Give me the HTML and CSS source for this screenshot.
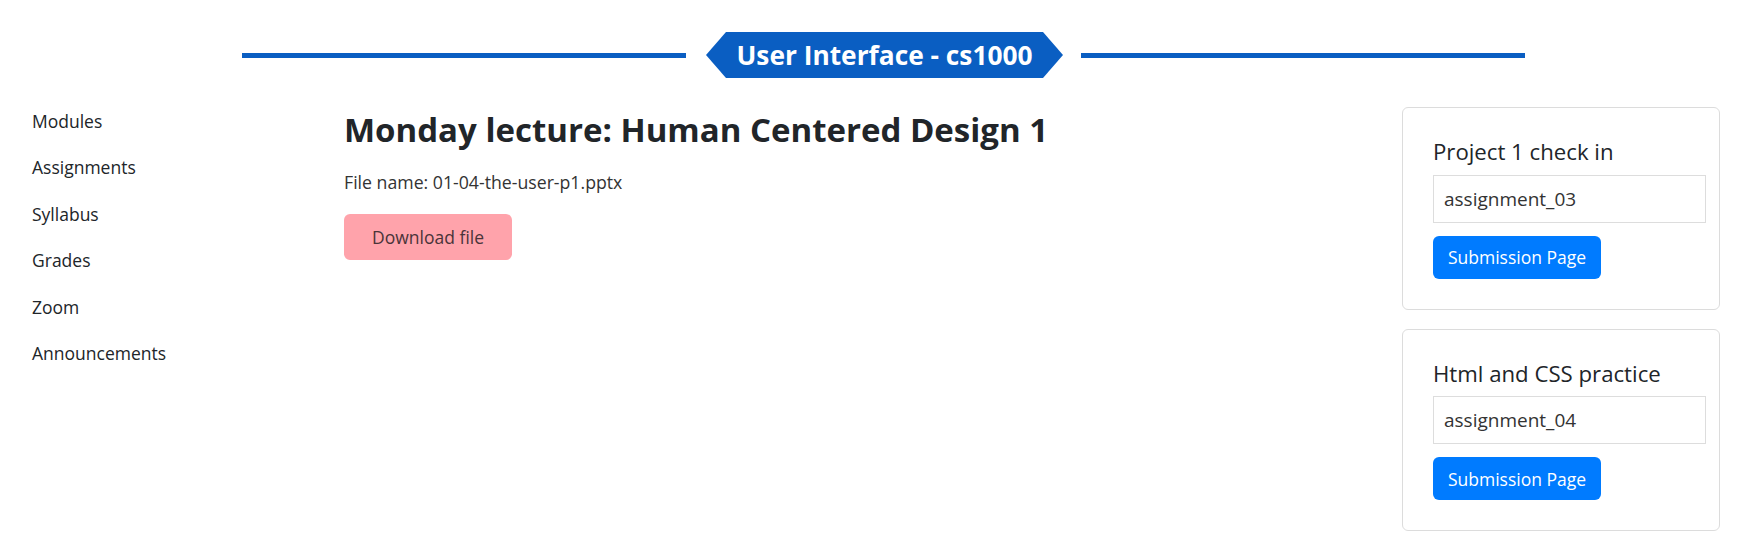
FILE: index.html
```html
<!DOCTYPE html>
<html lang="en">
<head>
<meta charset="utf-8">
<title>User Interface - cs1000</title>
<link rel="stylesheet" href="styles.css">
</head>
<body>
<header class="banner">
  <span class="rule"></span>
  <h1 class="course-title">User Interface - cs1000</h1>
  <span class="rule"></span>
</header>
<div class="layout">
  <nav class="side-nav">
    <a class="nav-link" href="#">Modules</a>
    <a class="nav-link" href="#">Assignments</a>
    <a class="nav-link" href="#">Syllabus</a>
    <a class="nav-link" href="#">Grades</a>
    <a class="nav-link" href="#">Zoom</a>
    <a class="nav-link" href="#">Announcements</a>
  </nav>
  <main class="lecture">
    <h2 class="lecture-title">Monday lecture: Human Centered Design 1</h2>
    <p class="file-name">File name: 01-04-the-user-p1.pptx</p>
    <button class="btn-download" type="button">Download file</button>
  </main>
  <aside class="assignments">
    <section class="card">
      <h5 class="card-title">Project 1 check in</h5>
      <input class="card-input" type="text" value="assignment_03">
      <button class="btn-submit" type="button">Submission Page</button>
    </section>
    <section class="card">
      <h5 class="card-title">Html and CSS practice</h5>
      <input class="card-input" type="text" value="assignment_04">
      <button class="btn-submit" type="button">Submission Page</button>
    </section>
  </aside>
</div>
</body>
</html>
```
FILE: styles.css
```css
* { box-sizing: border-box; }
body {
  margin: 0;
  font-family: "Open Sans", "Noto Sans", sans-serif;
  color: #212529;
  background: #fff;
}
.banner {
  display: flex;
  align-items: center;
  justify-content: center;
  padding-left: 12px;
  margin-top: 32px;
  margin-bottom: 20px;
}
.rule {
  width: 444px;
  height: 5px;
  background: #0a5ec2;
}
.course-title {
  margin: 0 18px 0 20px;
  width: 357px;
  height: 46px;
  background: #0a5ec2;
  color: #fff;
  font-size: 26.3px;
  font-weight: 700;
  display: flex;
  align-items: center;
  justify-content: center;
  clip-path: polygon(20px 0, calc(100% - 20px) 0, 100% 50%, calc(100% - 20px) 100%, 20px 100%, 0 50%);
}
.layout {
  display: grid;
  grid-template-columns: 330px 1fr 318px;
  padding: 0 35px 0 14px;
}
.side-nav {
  display: flex;
  flex-direction: column;
  align-items: flex-start;
}
.nav-link {
  color: #212529;
  text-decoration: none;
  font-size: 17.5px;
  line-height: 27px;
  padding: 9.75px 18px;
}
.lecture {
  padding-top: 12px;
  padding-right: 30px;
}
.lecture-title {
  margin: 0 0 20px;
  font-size: 33px;
  line-height: 1.2;
  font-weight: 700;
}
.file-name {
  margin: 0 0 19px;
  font-size: 17.7px;
  line-height: 25.5px;
  color: #333;
}
.btn-download {
  font-family: inherit;
  width: 168px;
  height: 46px;
  border: 0;
  border-radius: 6px;
  background: #ffa3ab;
  color: #4a3439;
  font-size: 17.5px;
}
.assignments {
  padding-top: 9px;
  display: flex;
  flex-direction: column;
  gap: 19px;
}
.card {
  border: 1px solid #dcdcdc;
  border-radius: 6px;
  padding: 31px 13px 30px 30px;
  display: flex;
  flex-direction: column;
  align-items: flex-start;
}
.card-title {
  margin: 0 0 9px;
  font-size: 22.2px;
  line-height: 1.2;
  font-weight: 500;
}
.card-input {
  width: 273px;
  height: 48px;
  border: 1px solid #ddd;
  border-radius: 0;
  padding: 0 10px;
  font-family: inherit;
  font-size: 19px;
  color: #333;
  margin-bottom: 13px;
}
.btn-submit {
  font-family: inherit;
  width: 168px;
  height: 43px;
  border: 0;
  border-radius: 6px;
  background: #007bff;
  color: #fff;
  font-size: 17.5px;
}
```
